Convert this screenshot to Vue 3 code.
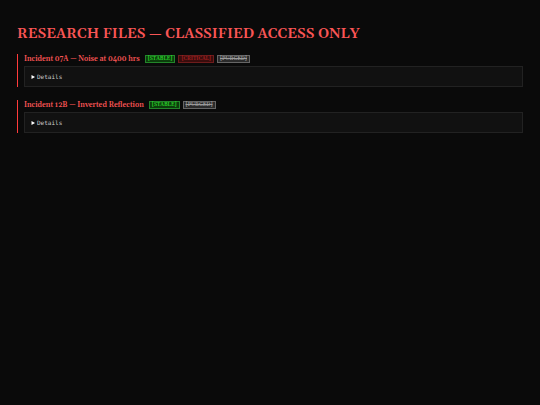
<script setup>
const incidents = [
  { title: 'Incident 07A — Noise at 0400 hrs', tags: ['stable', 'critical', 'purged'] },
  { title: 'Incident 12B — Inverted Reflection', tags: ['stable', 'purged'] },
]
</script>

<template>
  <main class="page">
    <h1>RESEARCH FILES — CLASSIFIED ACCESS ONLY</h1>
    <section v-for="item in incidents" :key="item.title" class="incident">
      <h2>
        <span class="title">{{ item.title }}</span>
        <span v-for="tag in item.tags" :key="tag" class="tag" :class="tag">[{{ tag.toUpperCase() }}]</span>
      </h2>
      <details>
        <summary>
          <svg class="marker" viewBox="0 0 4 4" aria-hidden="true"><path d="M0.5 0L4 2L0.5 4Z" /></svg>Details
        </summary>
      </details>
    </section>
  </main>
</template>

<style>
body {
  background: #0a0a0a;
}
</style>

<style scoped>
.page {
  padding: 26px 17px;
  color: #cccccc;
  font-family: Gelasio, Georgia, "Liberation Serif", serif;
}
h1 {
  margin: 0 0 11px;
  color: #f95555;
  font-size: 14px;
  line-height: 17px;
  font-weight: 600;
}
.incident {
  margin-bottom: 13px;
  padding-left: 6px;
  border-left: 1px solid #ff3b3b;
}
h2 {
  display: flex;
  align-items: center;
  gap: 3px;
  margin: 0 0 2px;
  color: #f95555;
  font-size: 7px;
  line-height: 10px;
  font-weight: 600;
}
.title {
  margin-right: 2px;
}
.tag {
  padding: 0 2px;
  border: 1px solid;
  font-size: 5px;
  line-height: 6px;
}
.stable {
  background: #0c3d0c;
  border-color: #23852a;
  color: #2bd42b;
}
.critical {
  background: #3a0d0d;
  border-color: #6e1c1c;
  color: #a32020;
}
.purged {
  background: #2b2b2b;
  border-color: #666666;
  color: #999999;
  text-decoration: line-through;
}
details {
  padding: 6px;
  border: 1px solid #222222;
  background: #111111;
  font-family: "DejaVu Sans Mono", monospace;
  font-size: 6px;
  line-height: 7px;
}
summary {
  display: flex;
  align-items: center;
  gap: 2px;
  cursor: pointer;
}
.marker {
  width: 4px;
  height: 4px;
  fill: #ffffff;
}
</style>
